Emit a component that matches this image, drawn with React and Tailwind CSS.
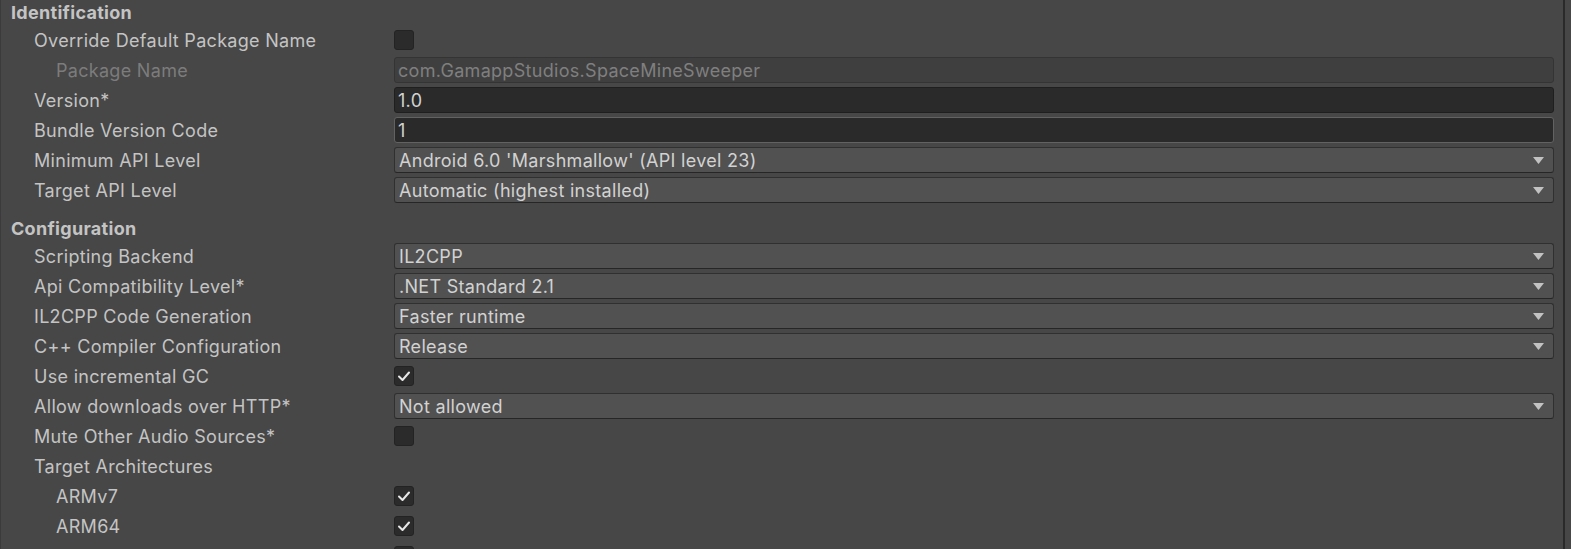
import React from 'react';

const font = { fontFamily: 'Inter, "Noto Sans", sans-serif' };

const Arrow = () => (
  <svg width="11" height="7" viewBox="0 0 11 7" className="shrink-0">
    <path d="M0 0 H11 L5.5 7 Z" fill="#c2c2c2" />
  </svg>
);

const Check = () => (
  <svg width="14" height="12" viewBox="0 0 14 12">
    <path d="M2 6.5 L5.5 10 L12 2.5" fill="none" stroke="#e6e6e6" strokeWidth="2" strokeLinecap="round" strokeLinejoin="round" />
  </svg>
);

const Checkbox = ({ checked }) => (
  <div className="w-[20px] h-[20px] rounded-[3px] bg-[#2b2b2b] border border-[#232323] flex items-center justify-center">
    {checked && <Check />}
  </div>
);

const Dropdown = ({ value }) => (
  <div className="flex-1 h-[26px] rounded-[3px] bg-[#515151] border border-[#303030] border-b-[#262626] flex items-center justify-between pl-[4px] pr-[9px] text-[#d2d2d2]">
    <span>{value}</span>
    <Arrow />
  </div>
);

const TextField = ({ value, variant }) => {
  const cls =
    variant === 'disabled'
      ? 'bg-[#3f3f3f] border-[#343434] text-[#7f7f7f]'
      : variant === 'hover'
      ? 'bg-[#2a2a2a] border-[#626262] text-[#d2d2d2]'
      : 'bg-[#2a2a2a] border-[#1f1f1f] text-[#d2d2d2]';
  return (
    <div className={`flex-1 h-[26px] rounded-[3px] border flex items-center pl-[3px] ${cls}`}>
      {value}
    </div>
  );
};

const Row = ({ label, sub, disabled, children }) => (
  <div className="h-[30px] shrink-0 flex items-center">
    <div
      className={`w-[393px] shrink-0 ${sub ? 'pl-[55px]' : 'pl-[33px]'} ${disabled ? 'text-[#7c7c7c]' : 'text-[#c4c4c4]'}`}
    >
      {label}
    </div>
    <div className="flex-1 flex items-center">{children}</div>
  </div>
);

const Header = ({ children, first }) => (
  <div className={`${first ? 'h-[25px]' : 'h-[26px] mt-[10px]'} shrink-0 flex items-center pl-[10px] font-bold text-[#c4c4c4]`}>
    {children}
  </div>
);

export default function App() {
  return (
    <div className="w-[1571px] h-[549px] overflow-hidden bg-[#474747] flex text-[18px] tracking-[0.3px]" style={font}>
      <div className="w-[1px] shrink-0 bg-[#3b3b3b]" />
      <div className="flex-1 pr-[9px] flex flex-col">
        <Header first>Identification</Header>
        <Row label="Override Default Package Name"><Checkbox /></Row>
        <Row label="Package Name" sub disabled>
          <TextField value="com.GamappStudios.SpaceMineSweeper" variant="disabled" />
        </Row>
        <Row label="Version*"><TextField value="1.0" /></Row>
        <Row label="Bundle Version Code"><TextField value="1" variant="hover" /></Row>
        <Row label="Minimum API Level"><Dropdown value="Android 6.0 'Marshmallow' (API level 23)" /></Row>
        <Row label="Target API Level"><Dropdown value="Automatic (highest installed)" /></Row>

        <Header>Configuration</Header>
        <Row label="Scripting Backend"><Dropdown value="IL2CPP" /></Row>
        <Row label="Api Compatibility Level*"><Dropdown value=".NET Standard 2.1" /></Row>
        <Row label="IL2CPP Code Generation"><Dropdown value="Faster runtime" /></Row>
        <Row label="C++ Compiler Configuration"><Dropdown value="Release" /></Row>
        <Row label="Use incremental GC"><Checkbox checked /></Row>
        <Row label="Allow downloads over HTTP*"><Dropdown value="Not allowed" /></Row>
        <Row label="Mute Other Audio Sources*"><Checkbox /></Row>
        <Row label="Target Architectures" />
        <Row label="ARMv7" sub><Checkbox checked /></Row>
        <Row label="ARM64" sub><Checkbox checked /></Row>
        <Row label="" sub><Checkbox /></Row>
      </div>
      <div className="w-[2px] shrink-0 bg-[#2a2a2a]" />
      <div className="w-[6px] shrink-0" />
    </div>
  );
}
